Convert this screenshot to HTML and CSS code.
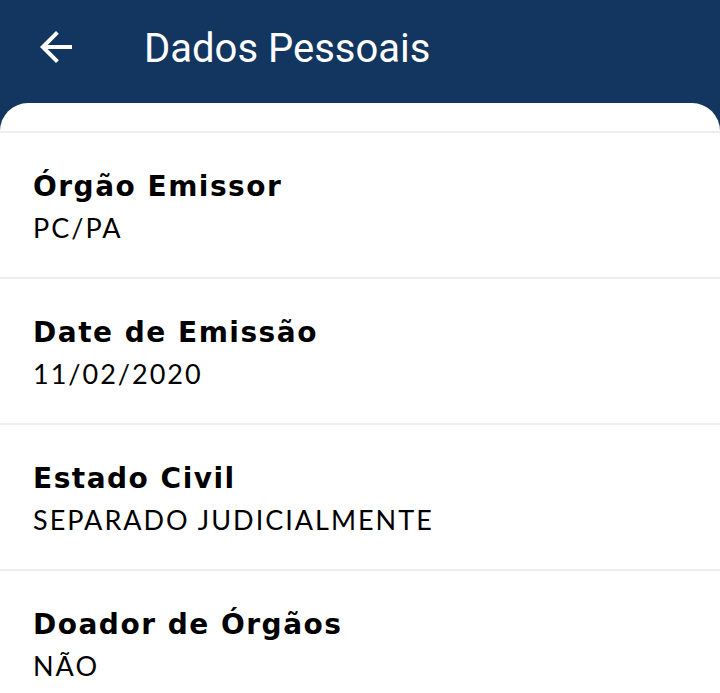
FILE: index.html
```html
<!DOCTYPE html>
<html lang="pt">
<head>
<meta charset="utf-8">
<title>Dados Pessoais</title>
<link rel="stylesheet" href="styles.css">
</head>
<body>
<header class="appbar">
  <button class="back" aria-label="Voltar">
    <svg viewBox="0 0 24 24" width="48" height="48"><path d="M20 11H7.83l5.59-5.59L12 4l-8 8 8 8 1.41-1.41L7.83 13H20v-2z" fill="#fff"/></svg>
  </button>
  <h1 class="title">Dados Pessoais</h1>
</header>
<main class="card">
  <ul class="list">
    <li class="item"><div class="label">Órgão Emissor</div><div class="value">PC/PA</div></li>
    <li class="item"><div class="label">Date de Emissão</div><div class="value">11/02/2020</div></li>
    <li class="item"><div class="label">Estado Civil</div><div class="value">SEPARADO JUDICIALMENTE</div></li>
    <li class="item"><div class="label">Doador de Órgãos</div><div class="value">NÃO</div></li>
  </ul>
</main>
</body>
</html>
```
FILE: styles.css
```css
html, body {
  margin: 0;
  padding: 0;
  height: 100%;
}
body {
  background: #12365f;
  overflow: hidden;
  display: flex;
  flex-direction: column;
}
.appbar {
  height: 103px;
  display: flex;
  align-items: flex-start;
  flex-shrink: 0;
}
.back {
  margin: 23px 0 0 32px;
  width: 48px;
  height: 48px;
  padding: 0;
  border: 0;
  background: none;
  display: flex;
}
.title {
  margin: 26px 0 0 64px;
  font-family: Roboto, "Liberation Sans", sans-serif;
  font-weight: 400;
  font-size: 40px;
  line-height: 46px;
  color: #fff;
}
.card {
  flex: 1;
  background: #fff;
  border-radius: 28px 28px 0 0;
  padding-top: 28px;
}
.list {
  list-style: none;
  margin: 0;
  padding: 0;
}
.item {
  border-top: 2px solid #eeeeee;
  height: 144px;
  padding: 0 0 0 33px;
  box-sizing: content-box;
  color: #000;
}
.label {
  padding-top: 34px;
  font-family: "DejaVu Sans", Lato, sans-serif;
  font-weight: 700;
  font-size: 28px;
  line-height: 40px;
  letter-spacing: 1.5px;
}
.value {
  margin-top: 1px;
  font-family: Lato, "Noto Sans", sans-serif;
  font-weight: 400;
  font-size: 27px;
  line-height: 40px;
  letter-spacing: 2px;
}
```
